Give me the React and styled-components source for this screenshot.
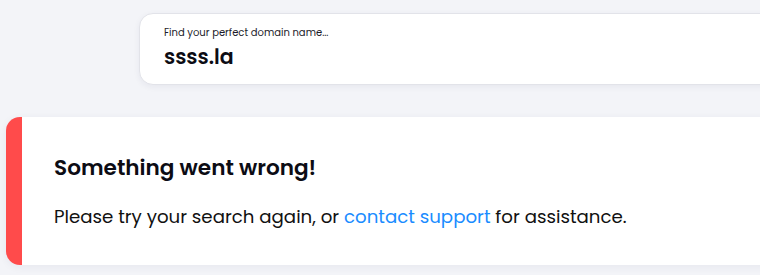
import React from 'react';
import styled, { createGlobalStyle } from 'styled-components';

const GlobalStyle = createGlobalStyle`
  body {
    margin: 0;
    background: #f3f4f8;
    font-family: "Poppins", "Inter", "Noto Sans", sans-serif;
    color: #111;
  }
`;

const Page = styled.div`
  width: 760px;
  height: 275px;
  overflow: hidden;
  padding-top: 13px;
  box-sizing: border-box;
`;

const SearchCard = styled.div`
  margin-left: 139px;
  width: 700px;
  height: 72px;
  box-sizing: border-box;
  background: #fff;
  border: 1px solid #e2e3e9;
  border-radius: 14px;
  box-shadow: 0 2px 6px rgba(30, 40, 80, 0.06);
  padding: 12px 24px 0;
`;

const Label = styled.div`
  font-size: 10px;
  color: #1c1c2a;
  line-height: 14px;
`;

const Query = styled.div`
  font-size: 20.5px;
  font-weight: 600;
  color: #0c0c14;
  line-height: 28px;
  margin-top: 3px;
`;

const ErrorCard = styled.div`
  margin: 32px 0 0 6px;
  width: 800px;
  height: 148px;
  box-sizing: border-box;
  background: #fff;
  border-left: 16px solid #ff4b4b;
  border-radius: 14px 0 0 14px;
  box-shadow: 0 2px 8px rgba(30, 40, 80, 0.06);
  padding: 37px 0 0 32px;
`;

const Title = styled.h2`
  margin: 0;
  font-size: 21.6px;
  font-weight: 600;
  line-height: 28px;
  color: #0c0c14;
`;

const Message = styled.p`
  margin: 22px 0 0;
  font-size: 18.2px;
  line-height: 26px;
  color: #111;
`;

const Link = styled.a`
  color: #1a8cff;
  text-decoration: none;
`;

export default function App() {
  return (
    <>
      <GlobalStyle />
      <Page>
        <SearchCard>
          <Label>Find your perfect domain name...</Label>
          <Query>ssss.la</Query>
        </SearchCard>
        <ErrorCard>
          <Title>Something went wrong!</Title>
          <Message>
            Please try your search again, or <Link href="#">contact support</Link> for assistance.
          </Message>
        </ErrorCard>
      </Page>
    </>
  );
}
